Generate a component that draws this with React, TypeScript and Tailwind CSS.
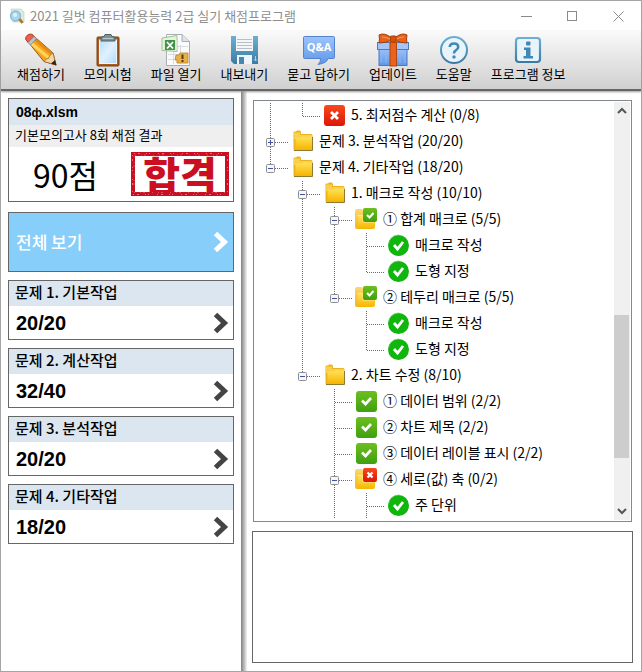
import type { ReactNode } from "react";
import clsx from "clsx";

type Icon = "folder" | "folderOk" | "folderBad" | "ok" | "bad" | "pass";

type TreeRow = {
  label: string;
  icon: Icon;
  // whether the vertical guide of each ancestor level keeps running
  guides: boolean[];
  last?: boolean;
  toggle?: "plus" | "minus";
};

const rows: TreeRow[] = [
  { label: "5. 최저점수 계산 (0/8)", icon: "bad", guides: [true], last: true },
  { label: "문제 3. 분석작업 (20/20)", icon: "folder", guides: [], toggle: "plus" },
  { label: "문제 4. 기타작업 (18/20)", icon: "folder", guides: [], last: true, toggle: "minus" },
  { label: "1. 매크로 작성 (10/10)", icon: "folder", guides: [false], toggle: "minus" },
  { label: "① 합계 매크로 (5/5)", icon: "folderOk", guides: [false, true], toggle: "minus" },
  { label: "매크로 작성", icon: "pass", guides: [false, true, true] },
  { label: "도형 지정", icon: "pass", guides: [false, true, true], last: true },
  { label: "② 테두리 매크로 (5/5)", icon: "folderOk", guides: [false, true], last: true, toggle: "minus" },
  { label: "매크로 작성", icon: "pass", guides: [false, true, false] },
  { label: "도형 지정", icon: "pass", guides: [false, true, false], last: true },
  { label: "2. 차트 수정 (8/10)", icon: "folder", guides: [false], last: true, toggle: "minus" },
  { label: "① 데이터 범위 (2/2)", icon: "ok", guides: [false, false] },
  { label: "② 차트 제목 (2/2)", icon: "ok", guides: [false, false] },
  { label: "③ 데이터 레이블 표시 (2/2)", icon: "ok", guides: [false, false] },
  { label: "④ 세로(값) 축 (0/2)", icon: "folderBad", guides: [false, false], toggle: "minus" },
  { label: "주 단위", icon: "pass", guides: [false, false, true] },
];

const sections = [
  { title: "문제 1. 기본작업", score: "20/20" },
  { title: "문제 2. 계산작업", score: "32/40" },
  { title: "문제 3. 분석작업", score: "20/20" },
  { title: "문제 4. 기타작업", score: "18/20" },
];

function Gradients() {
  return (
    <svg width="0" height="0" className="absolute" aria-hidden="true">
      <defs>
        <linearGradient id="yellow" x1="0" y1="0" x2="0" y2="1">
          <stop offset="0" stopColor="#ffe35a" />
          <stop offset="1" stopColor="#f7b500" />
        </linearGradient>
        <linearGradient id="pale" x1="0" y1="0" x2="0" y2="1">
          <stop offset="0" stopColor="#fbd76c" />
          <stop offset="1" stopColor="#f3b526" />
        </linearGradient>
        <linearGradient id="green" x1="0" y1="0" x2="0" y2="1">
          <stop offset="0" stopColor="#6cc01c" />
          <stop offset="1" stopColor="#3f9f12" />
        </linearGradient>
        <linearGradient id="red" x1="0" y1="0" x2="0" y2="1">
          <stop offset="0" stopColor="#f8491c" />
          <stop offset="1" stopColor="#dc1606" />
        </linearGradient>
        <linearGradient id="blue" x1="0" y1="0" x2="0" y2="1">
          <stop offset="0" stopColor="#6bb0d4" />
          <stop offset="1" stopColor="#3a7ba6" />
        </linearGradient>
        <linearGradient id="bubble" x1="0" y1="0" x2="0" y2="1">
          <stop offset="0" stopColor="#9cc4fb" />
          <stop offset="1" stopColor="#5f96e8" />
        </linearGradient>
        <linearGradient id="paper" x1="0" y1="0" x2="1" y2="1">
          <stop offset="0" stopColor="#b9dcf8" />
          <stop offset="0.5" stopColor="#e0f1fd" />
          <stop offset="1" stopColor="#b4d9f6" />
        </linearGradient>
      </defs>
    </svg>
  );
}

function NodeIcon({ icon }: { icon: Icon }) {
  return (
    <svg width="24" height="24" viewBox="0 0 24 24" className="shrink-0 overflow-visible" aria-hidden="true">
      {icon === "folder" && (
        <>
          <path d="M1.5 3.5Q1.500 2.500 2.500 2.500H4L5 1.500H8L9 3V5H19Q20.500 5 20.500 6.500V20.500Q20.500 21.500 19.500 21.500H2.500Q1.500 21.500 1.500 20.500Z" fill="#efb21a" />
          <path d="M2 3.500H8V6H19Q20 6 20 7V10H2Z" fill="#f8cf4e" />
          <path d="M3.500 9.500Q3.500 8.500 4.500 8.500H10L11 7.500H19.500Q20 7.500 20 8.500V20.500H3.500Z" fill="url(#yellow)" />
          <path d="M2 21.500H20.500V8" fill="none" stroke="#8f7a33" />
        </>
      )}
      {(icon === "folderOk" || icon === "folderBad") && (
        <>
          <path d="M-1 4Q-1 2 1 2H6L7 4H15V22H1Q-1 22 -1 20Z" fill="url(#pale)" />
          <path d="M2 9Q2 8 3 8H9L10 12H19V20Q19 22 17 22H2Q0 22 2 19Z" fill="url(#yellow)" />
          <path d="M1.500 8.500H7V15H18" fill="none" stroke="#ffe694" />
          <rect x="7" y="1" width="14" height="14" rx="2" fill={icon === "folderOk" ? "url(#green)" : "url(#red)"} />
          {icon === "folderOk" ? (
            <path d="M11 8L13.500 10.500L17.500 6" fill="none" stroke="#fff" strokeWidth="2" />
          ) : (
            <path d="M11.500 5.500L16.500 10.500M16.500 5.500L11.500 10.500" stroke="#fff" strokeWidth="2.200" />
          )}
        </>
      )}
      {icon === "ok" && (
        <>
          <rect x="0" y="2" width="21" height="21" rx="3" fill="url(#green)" />
          <path d="M6 11.500L9.500 15L15 9" fill="none" stroke="#fff" strokeWidth="2.600" />
        </>
      )}
      {icon === "bad" && (
        <>
          <rect x="0" y="2" width="21" height="21" rx="3" fill="url(#red)" />
          <path d="M7 9L14 16M14 9L7 16" stroke="#fff" strokeWidth="2.800" />
        </>
      )}
      {icon === "pass" && (
        <>
          <circle cx="10.5" cy="12.5" r="10.500" fill="#10b50e" />
          <path d="M1 10A10 10 0 0 1 12 2.200" fill="none" stroke="#69c94c" strokeWidth="1" strokeDasharray="2 1" />
          <path d="M6 12L9.500 16L15 9" fill="none" stroke="#fff" strokeWidth="2.800" />
        </>
      )}
    </svg>
  );
}

function Guide({ on }: { on: boolean }) {
  return (
    <svg width="32" height="26" className="shrink-0" aria-hidden="true">
      {on && <path d="M8.500 0V26" stroke="#6a6a6a" strokeDasharray="1 1" />}
    </svg>
  );
}

function Branch({ last, toggle }: { last?: boolean; toggle?: "plus" | "minus" }) {
  return (
    <svg width="30" height="26" className="shrink-0" aria-hidden="true">
      <path d={last ? "M8.500 0V14" : "M8.500 0V26"} stroke="#6a6a6a" strokeDasharray="1 1" />
      <path d="M9 13.500H27" stroke="#6a6a6a" strokeDasharray="1 1" />
      {toggle && (
        <>
          <rect x="4.500" y="9.500" width="8" height="8" rx="1" fill="#f7f7f7" stroke="#8f8f8f" />
          <path d="M6 13.500H11" stroke="#3c50a8" />
          {toggle === "plus" && <path d="M8.500 11V16" stroke="#3c50a8" />}
        </>
      )}
    </svg>
  );
}

function Chevron({ className }: { className?: string }) {
  return (
    <svg width="16" height="22" viewBox="0 0 16 22" className={className} aria-hidden="true">
      <path d="M2.500 2.500L11.500 11L2.500 19.500" fill="none" stroke="currentColor" strokeWidth="5" />
    </svg>
  );
}

function Stamp() {
  return (
    <div className="relative flex h-11 w-[98px] items-center justify-center border-4 border-[#cb0f22] text-[40px] leading-9 font-black text-[#cb0f22]">
      합격
      {/* worn ink on the frame */}
      <svg width="98" height="44" viewBox="0 0 98 44" className="absolute -top-1 -left-1" aria-hidden="true">
        <path
          d="M3 1.500H95M2 42.500H95M1.500 3V41M96.500 3V41"
          stroke="#fff"
          strokeOpacity="0.400"
          strokeDasharray="1 3 2 6 1 2 1 8"
        />
        <path d="M4 3H94M3 40.500H94M3 4V40" stroke="#fff" strokeOpacity="0.250" strokeDasharray="1 5 1 2 2 7" />
      </svg>
    </div>
  );
}

function Pencil() {
  return (
    <svg width="34" height="34" viewBox="0 0 34 34">
      <path d="M2.500 7L8 1.500L29 20L32 32L20 28.500Z" fill="#f6a51c" stroke="#9a5a10" />
      <path d="M5 8.500L25 25" stroke="#ffd35c" strokeWidth="3" />
      <path d="M9.500 5L28.500 21.500" stroke="#e48912" strokeWidth="2.500" />
      <path d="M1.500 6Q2 1 7.500 1L10 3.500L4 9.500Z" fill="#ea5f45" stroke="#b4402c" />
      <path d="M4 9.500L10 3.500L12.500 5.500L6.500 12Z" fill="#b9c4cf" stroke="#7d8893" strokeWidth="0.800" />
      <path d="M20 28.500Q22 25 24.500 25.500Q25 22 29 20L32 32Z" fill="#f5d7a4" stroke="#9a6a30" strokeWidth="0.800" />
      <path d="M27 30.500L31 27L32.500 32.500Z" fill="#2d2420" />
    </svg>
  );
}

function Clipboard() {
  return (
    <svg width="34" height="34" viewBox="0 0 34 34">
      <rect x="6" y="4" width="22" height="29" rx="1" fill="#a85c22" stroke="#7d3f12" />
      <rect x="8.500" y="7" width="17" height="23.500" fill="url(#paper)" stroke="#e9f5ff" />
      <path d="M10 5Q10 3.500 12 3.500H13L14 1.500H20L21 3.500H22Q24 3.500 24 5V8H10Z" fill="#7d9294" stroke="#4e6264" />
      <path d="M12 5.500H22" stroke="#b9c9ca" />
    </svg>
  );
}

function SheetFile() {
  return (
    <svg width="34" height="34" viewBox="0 0 34 34">
      <path d="M7.500 1.500H23L30.500 8.500V32.500H7.500Z" fill="#fbfbfb" stroke="#a9aeb4" />
      <path d="M23 1.500V8.500H30.500" fill="#dfe3e8" stroke="#a9aeb4" />
      <path d="M9 21.500H29M9 26.500H29M14.500 12V31M21.500 12V31M18 13.500H29" stroke="#d7dce2" />
      <path d="M3 5L18 2.500V18.500L3 17.500Z" fill="#e5f2df" stroke="#9fc38f" />
      <path d="M5 7H18V17H5Z" fill="#d9ecd2" />
      <path d="M6 7H16V17H6Z" fill="#3f9448" />
      <path d="M8 9L14 15.500M14 9L8 15.500" stroke="#fff" strokeWidth="1.800" />
      <path d="M17 22H20L21 20H29V30H18V27H16Z" fill="#e9b04a" stroke="#b9822a" strokeWidth="0.800" />
      <path d="M23.500 21.500V26" stroke="#5c3b10" strokeWidth="2" />
      <rect x="22.500" y="27" width="2" height="2" fill="#5c3b10" />
    </svg>
  );
}

function Floppy() {
  return (
    <svg width="34" height="34" viewBox="0 0 34 34">
      <path d="M4 3H31V31H7L4 28Z" fill="url(#blue)" />
      <rect x="9" y="3" width="17" height="15" fill="#f4f6f8" />
      <path d="M10 6.500H25M10 9.500H25M10 12.500H25M10 15.500H25" stroke="#b4bfc8" />
      <path d="M10 22H25V31H10Z" fill="#eef4f8" />
      <rect x="12" y="24" width="5" height="7" fill="#4587b1" />
      <path d="M28.500 23V28M27 26.500L28.500 28L30 26.500" stroke="#a9d2ea" fill="none" />
    </svg>
  );
}

function Bubble() {
  return (
    <svg width="34" height="34" viewBox="0 0 34 34">
      <path d="M2.500 3.500H31.500Q32.500 3.500 32.500 4.500V24.500Q32.500 25.500 31.500 25.500H26Q25 30 16 31.500Q19 29 18.500 25.500H2.500Q1.500 25.500 1.500 24.500V4.500Q1.500 3.500 2.500 3.500Z" fill="url(#bubble)" stroke="#5583cf" />
      <text x="17" y="18" textAnchor="middle" fontSize="11" fontWeight="700" fill="#fff" fontFamily="Open Sans, sans-serif">
        Q&amp;A
      </text>
    </svg>
  );
}

function Gift() {
  return (
    <svg width="34" height="34" viewBox="0 0 34 34">
      <rect x="3" y="15" width="28" height="17.500" fill="url(#bubble)" stroke="#4e78b8" />
      <rect x="1.500" y="9.500" width="31" height="7" fill="#a3c5f7" stroke="#4e78b8" />
      <path d="M5 19V30M10 19V30M24 19V30M29 19V30" stroke="#8fb6f0" />
      <rect x="14" y="9" width="6.500" height="24" fill="#e8631c" stroke="#b2430c" />
      <path d="M16 5Q8 -1 3 2Q4 6 3 10Q10 10 16 7ZM18.500 5Q26 -1 31 2Q30 6 31 10Q24 10 18.500 7Z" fill="#e5611c" stroke="#a93d08" />
      <path d="M6 4Q10 4 14 6M28 4Q24 4 20 6" fill="none" stroke="#f79c54" />
      <rect x="14.500" y="3" width="5.500" height="6" rx="1" fill="#d5520f" stroke="#a93d08" />
    </svg>
  );
}

function Help() {
  return (
    <svg width="34" height="34" viewBox="0 0 34 34">
      <circle cx="17" cy="17" r="13" fill="#e9f3fa" stroke="url(#blue)" strokeWidth="2" />
      <path d="M12.800 14Q12.800 10.500 17 10.500Q21.200 10.500 21.200 14Q21.200 16 18.800 17.300Q17 18.300 17 20.500" fill="none" stroke="#4288b4" strokeWidth="2.600" />
      <circle cx="17" cy="24" r="1.700" fill="#4288b4" />
    </svg>
  );
}

function Info() {
  return (
    <svg width="34" height="34" viewBox="0 0 34 34">
      <rect x="5" y="5" width="24" height="24" rx="3" fill="#e9f3fa" stroke="url(#blue)" strokeWidth="2.200" />
      <rect x="15" y="8.500" width="4.500" height="4" rx="1" fill="#4288b4" />
      <path d="M13 14.500H19.500V23H22V25.500H12.500V23H15V17H13Z" fill="#4288b4" />
    </svg>
  );
}

function AppIcon() {
  return (
    <svg width="16" height="16" viewBox="0 0 16 16" aria-hidden="true">
      <path d="M2 1H12L15 4V14H4Z" fill="#dcecdc" stroke="#b5cdbb" strokeWidth="0.600" />
      <circle cx="6.500" cy="8" r="5" fill="#a9d6ee" stroke="#8dbdd6" strokeWidth="1.400" />
      <circle cx="6" cy="7" r="2" fill="#def2fb" />
      <path d="M10.500 11L13.500 15" stroke="#b8701f" strokeWidth="2.600" />
    </svg>
  );
}

const tools: { label: string; icon: ReactNode }[] = [
  { label: "채점하기", icon: <Pencil /> },
  { label: "모의시험", icon: <Clipboard /> },
  { label: "파일 열기", icon: <SheetFile /> },
  { label: "내보내기", icon: <Floppy /> },
  { label: "묻고 답하기", icon: <Bubble /> },
  { label: "업데이트", icon: <Gift /> },
  { label: "도움말", icon: <Help /> },
  { label: "프로그램 정보", icon: <Info /> },
];

function TitleBar() {
  return (
    <header className="flex h-[30px] items-center pl-2">
      <AppIcon />
      <h1 className="ml-[5px] flex-1 text-[13px] leading-5 whitespace-nowrap text-[#8e8e8e]">
        2021 길벗 컴퓨터활용능력 2급 실기 채점프로그램
      </h1>
      <div className="flex text-[#8a8a8a]">
        <button type="button" aria-label="최소화" className="flex h-7 w-[46px] items-center justify-center">
          <svg width="11" height="11"><path d="M0 5.500H11" stroke="currentColor" /></svg>
        </button>
        <button type="button" aria-label="최대화" className="flex h-7 w-[46px] items-center justify-center">
          <svg width="11" height="11"><rect x="0.500" y="0.500" width="9" height="9" fill="none" stroke="currentColor" /></svg>
        </button>
        <button type="button" aria-label="닫기" className="flex h-7 w-[46px] items-center justify-center">
          <svg width="11" height="11"><path d="M0.500 0.500L10.500 10.500M10.500 0.500L0.500 10.500" stroke="currentColor" /></svg>
        </button>
      </div>
    </header>
  );
}

function Toolbar() {
  return (
    <nav className="relative flex h-[60px] items-start gap-[19px] border-b-2 border-[#666] bg-linear-to-b from-[#fafafa] to-[#d0d0d0] pt-[2px] pl-4 shadow-[0_1px_2px_#9a9a9a]">
      {tools.map((tool) => (
        <button key={tool.label} type="button" className="flex flex-col items-center text-[13px] leading-[14px] whitespace-nowrap text-black">
          {tool.icon}
          {tool.label}
        </button>
      ))}
    </nav>
  );
}

function Sidebar() {
  return (
    <aside className="flex w-60 shrink-0 flex-col px-[7px] pt-[7px]">
      <section className="border border-[#666]">
        <h2 className="h-[26px] bg-[#dce6f0] pl-[7px] font-['Liberation_Sans','Noto_Sans_CJK_KR',sans-serif] text-[14px] leading-[26px] font-bold">
          08<span className="text-[12px]">ф</span>.xlsm
        </h2>
        <p className="h-[22px] bg-[#efefef] pl-[6px] text-[13px] leading-5">기본모의고사 8회 채점 결과</p>
        <div className="flex h-[54px] items-center justify-between pr-1 pl-6">
          <strong className="text-[32px] leading-[50px] font-normal">90점</strong>
          <Stamp />
        </div>
      </section>

      <button
        type="button"
        className="mt-[10px] flex h-[60px] items-center justify-between border border-[#666] bg-[#87cefa] pr-1 pl-[7px] text-[17px] font-medium text-white"
      >
        전체 보기
        <Chevron />
      </button>

      {sections.map((section) => (
        <button key={section.title} type="button" className="mt-2 block h-[60px] border border-[#666] text-left">
          <span className="block h-[25px] bg-[#dce6f0] pl-[6px] text-[15px] leading-[22px] font-medium">{section.title}</span>
          <span className="flex h-[33px] items-center justify-between pr-1 pl-[7px] font-['Liberation_Sans',sans-serif] text-[20px] font-bold">
            {section.score}
            <Chevron className="text-[#444]" />
          </span>
        </button>
      ))}
    </aside>
  );
}

function ResultTree() {
  return (
    <div className="mx-px flex border border-[#828790] p-px">
      <ul role="tree" className="min-w-0 flex-1 overflow-hidden py-px pl-[7px]">
        {rows.map((row, i) => (
          <li
            key={i}
            role="treeitem"
            aria-level={row.guides.length + 1}
            aria-expanded={row.toggle ? row.toggle === "minus" : undefined}
            className="flex h-[26px] items-start"
          >
            {row.guides.map((on, level) => (
              <Guide key={level} on={on} />
            ))}
            <Branch last={row.last} toggle={row.toggle} />
            <NodeIcon icon={row.icon} />
            <span className="ml-[3px] text-[14px] leading-[22px] whitespace-nowrap">{row.label}</span>
          </li>
        ))}
      </ul>
      <ScrollBar />
    </div>
  );
}

function ScrollBar() {
  return (
    <div className="flex w-4 flex-col items-center bg-[#f0f0f0] text-[#555]">
      <Arrow />
      <div className="mt-auto mb-[45px] h-[143px] w-full border-r border-[#f0f0f0] bg-[#cdcdcd]" />
      <Arrow down />
    </div>
  );
}

function Arrow({ down }: { down?: boolean }) {
  return (
    <svg width="16" height="17" className={clsx("shrink-0", down && "rotate-180")} aria-hidden="true">
      <path d="M4 11L8 7L12 11" fill="none" stroke="currentColor" strokeWidth="2" />
    </svg>
  );
}

export default function App() {
  return (
    <div className="flex min-h-screen flex-col border border-[#a5a5a5] bg-white font-['Noto_Sans_CJK_KR',sans-serif] text-black">
      <Gradients />
      <TitleBar />
      <Toolbar />
      <div className="flex flex-1">
        <Sidebar />
        <div className="w-[6px] shrink-0 bg-linear-to-r from-[#808080] to-[#f4f4f4]" />
        <main className="flex min-w-0 flex-1 flex-col pt-[9px] pr-2 pb-2 pl-[5px]">
          <ResultTree />
          <textarea
            readOnly
            aria-label="채점 설명"
            className="mt-[9px] min-h-[132px] flex-1 resize-none border border-[#666] bg-white p-2 text-[13px] outline-none"
          />
        </main>
      </div>
    </div>
  );
}
